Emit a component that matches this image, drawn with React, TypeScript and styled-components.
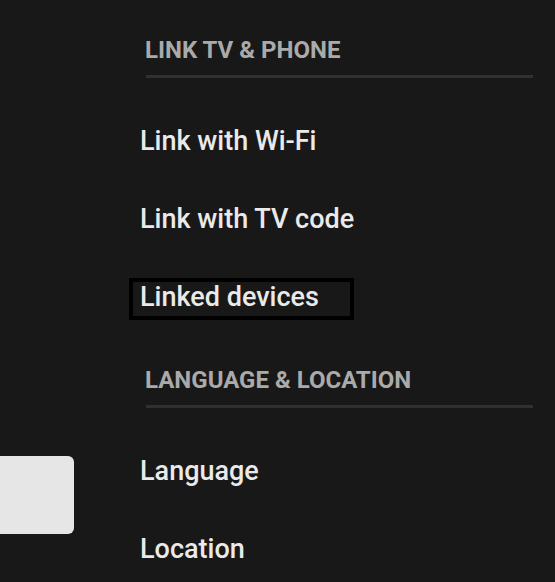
import React from "react";
import styled, { createGlobalStyle } from "styled-components";

const Global = createGlobalStyle`
  html, body { margin: 0; padding: 0; background: #181818; }
  body { font-family: Roboto, "Noto Sans", sans-serif; overflow: hidden; }
`;

const Page = styled.div`
  display: flex;
  width: 555px;
  height: 582px;
  background: #181818;
  overflow: hidden;
`;

const Sidebar = styled.div`
  width: 74px;
  flex-shrink: 0;
  padding-top: 456px;
`;

const NavCard = styled.div`
  width: 74px;
  height: 78px;
  background: #e6e6e6;
  border-radius: 0 6px 6px 0;
`;

const Content = styled.div`
  margin-left: 55px;
  padding-top: 36px;
  display: flex;
  flex-direction: column;
  gap: 46px;
`;

const Section = styled.section`
  display: flex;
  flex-direction: column;
  align-items: flex-start;
`;

const Header = styled.h2`
  margin: 0;
  padding-left: 16px;
  font-size: 24px;
  line-height: 28px;
  font-weight: 700;
  color: #aaaaaa;
  text-transform: uppercase;
  white-space: nowrap;
`;

const Divider = styled.div`
  margin: 11px 0 0 17px;
  width: 387px;
  height: 3px;
  background: #303030;
`;

const List = styled.div`
  margin-top: 44px;
  display: flex;
  flex-direction: column;
  align-items: flex-start;
  gap: 36px;
`;

const Item = styled.div<{ $focused?: boolean }>`
  box-sizing: border-box;
  border: 4px solid ${(p) => (p.$focused ? "#000" : "transparent")};
  padding: 1px 31px 5px 7px;
  font-size: 27px;
  line-height: 28px;
  font-weight: 500;
  color: #eaeaea;
  white-space: nowrap;
`;

const sections = [
  {
    title: "Link TV & Phone",
    items: ["Link with Wi-Fi", "Link with TV code", "Linked devices"],
    focused: 2,
  },
  {
    title: "Language & Location",
    items: ["Language", "Location"],
    focused: -1,
  },
];

export default function App() {
  return (
    <>
      <Global />
      <Page>
        <Sidebar>
          <NavCard />
        </Sidebar>
        <Content>
          {sections.map((s) => (
            <Section key={s.title}>
              <Header>{s.title}</Header>
              <Divider />
              <List>
                {s.items.map((it, i) => (
                  <Item key={it} $focused={i === s.focused}>
                    {it}
                  </Item>
                ))}
              </List>
            </Section>
          ))}
        </Content>
      </Page>
    </>
  );
}
